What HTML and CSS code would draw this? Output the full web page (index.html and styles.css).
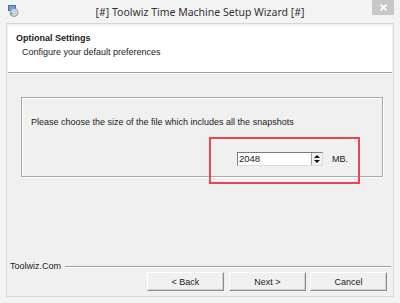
FILE: index.html
```html
<!DOCTYPE html>
<html lang="en">
<head>
  <meta charset="UTF-8">
  <title>Toolwiz Time Machine Setup Wizard</title>
  <link rel="stylesheet" href="styles.css">
</head>
<body>

  <div class="window">

    <!-- title bar -->
    <div class="titlebar">
      <svg class="app-icon" width="11" height="12" viewBox="0 0 11 12">
        <rect x="0.5" y="0.5" width="7" height="5" fill="#6fa0d8" stroke="#3f6fae"/>
        <circle cx="6" cy="7.5" r="4" fill="#d9dde8" stroke="#8a93a8"/>
        <circle cx="6" cy="7.5" r="1.3" fill="#fff" stroke="#8a93a8" stroke-width="0.6"/>
        <path d="M2.5 8.5 L4 7 L4 10 Z" fill="#2fa44a"/>
      </svg>
      <div class="title">[#] Toolwiz Time Machine Setup Wizard [#]</div>
      <div class="close-btn">
        <svg width="7" height="7" viewBox="0 0 7 7">
          <path d="M0.5 0.5 L6.5 6.5 M6.5 0.5 L0.5 6.5" stroke="#fff" stroke-width="1.6"/>
        </svg>
      </div>
    </div>

    <div class="client">

      <!-- header -->
      <div class="header">
        <div class="header-title">Optional Settings</div>
        <div class="header-sub">Configure your default preferences</div>
      </div>

      <!-- main -->
      <div class="main">
        <div class="group">
          <div class="group-text">Please choose the size of the file which includes all the snapshots</div>
          <div class="size-row">
            <div class="spin-input">
              <span class="spin-value">2048</span>
              <span class="spin-btns">
                <span class="arrow-up"></span>
                <span class="arrow-down"></span>
              </span>
            </div>
            <span class="unit">MB.</span>
          </div>
          <div class="highlight"></div>
        </div>
      </div>

      <!-- footer -->
      <div class="brand-row">
        <span class="brand">Toolwiz.Com</span>
        <span class="brand-line"></span>
      </div>
      <div class="buttons">
        <button class="btn btn-back">&lt; Back</button>
        <button class="btn btn-next">Next &gt;</button>
        <button class="btn btn-cancel">Cancel</button>
      </div>

    </div>
  </div>

</body>
</html>
```

FILE: styles.css
```css
* {
  box-sizing: border-box;
}

body {
  margin: 0;
  background: #f3f3f3;
  font-family: 'Liberation Sans', Arial, sans-serif;
  font-size: 9px;
  color: #1a1a1a;
}

.window {
  width: 400px;
  height: 303px;
  padding: 0 6px 6px;
  display: flex;
  flex-direction: column;
  background: #f3f3f3;
}

.titlebar {
  height: 23px;
  display: grid;
  grid-template-columns: 22px 1fr 22px;
  align-items: start;
}

.app-icon {
  margin: 5px 0 0 2px;
}

.title {
  text-align: center;
  font-family: 'Noto Sans', sans-serif;
  font-size: 10.5px;
  line-height: 16px;
  margin-top: 4px;
  color: #333;
}

.close-btn {
  width: 22px;
  height: 15px;
  background: #c7c7c7;
  display: flex;
  align-items: center;
  justify-content: center;
}

.client {
  flex: 1;
  display: flex;
  flex-direction: column;
  background: #f0f0f0;
  border: 1px solid #d6d6d6;
  padding: 2px 0 5px 1px;
}

.header {
  height: 47px;
  margin-right: 1px;
  background: #fff;
  border-bottom: 1px solid #a0a0a0;
  box-shadow: 0 1px #fff;
  padding: 7px 0 0 8px;
}

.header-title {
  font-weight: bold;
  line-height: 11px;
}

.header-sub {
  line-height: 11px;
  margin: 3px 0 0 6px;
}

.main {
  flex: 1;
  padding: 24px 0 0 13px;
}

.group {
  position: relative;
  width: 362px;
  height: 80px;
  border: 1px solid #a8a8a8;
  box-shadow: inset 1px 1px #fff, 1px 1px #fff;
  padding: 19px 0 0 9px;
}

.group-text {
  line-height: 11px;
}

.size-row {
  display: flex;
  align-items: center;
  gap: 9px;
  margin-top: 24px;
  padding-left: 206px;
}

.spin-input {
  width: 86px;
  height: 14px;
  display: flex;
  background: #fff;
  border: 1px solid;
  border-color: #7a7a7a #dcdcdc #dcdcdc #7a7a7a;
}

.spin-value {
  flex: 1;
  padding-left: 1px;
  line-height: 12px;
  font-size: 9.5px;
}

.spin-btns {
  width: 11px;
  display: flex;
  flex-direction: column;
  align-items: center;
  justify-content: space-around;
  background: #f0f0f0;
  border-left: 1px solid #a0a0a0;
  padding: 1px 0;
}

.arrow-up {
  border-left: 3px solid transparent;
  border-right: 3px solid transparent;
  border-bottom: 3px solid #111;
}

.arrow-down {
  border-left: 3px solid transparent;
  border-right: 3px solid transparent;
  border-top: 3px solid #111;
}

.unit {
  line-height: 11px;
}

.highlight {
  position: absolute;
  left: 187px;
  top: 39px;
  width: 151px;
  height: 47px;
  border: 2px solid #e8474d;
}

.brand-row {
  height: 12px;
  display: flex;
  align-items: center;
  padding: 0 2px 0 2px;
}

.brand {
  line-height: 11px;
  margin-right: 4px;
}

.brand-line {
  flex: 1;
  border-top: 1px solid #a0a0a0;
  box-shadow: 0 1px #fff;
}

.buttons {
  display: flex;
  justify-content: flex-end;
  gap: 4px;
  padding-right: 6px;
}

.btn {
  width: 77px;
  height: 19px;
  font-family: 'Liberation Sans', Arial, sans-serif;
  font-size: 9px;
  color: #1a1a1a;
  background: #f0f0f0;
  border: 1px solid;
  border-color: #fff #8a8a8a #8a8a8a #fff;
  box-shadow: inset -1px -1px #d4d4d4;
  padding: 0;
}

.btn-back {
  margin-right: 1px;
}
```
